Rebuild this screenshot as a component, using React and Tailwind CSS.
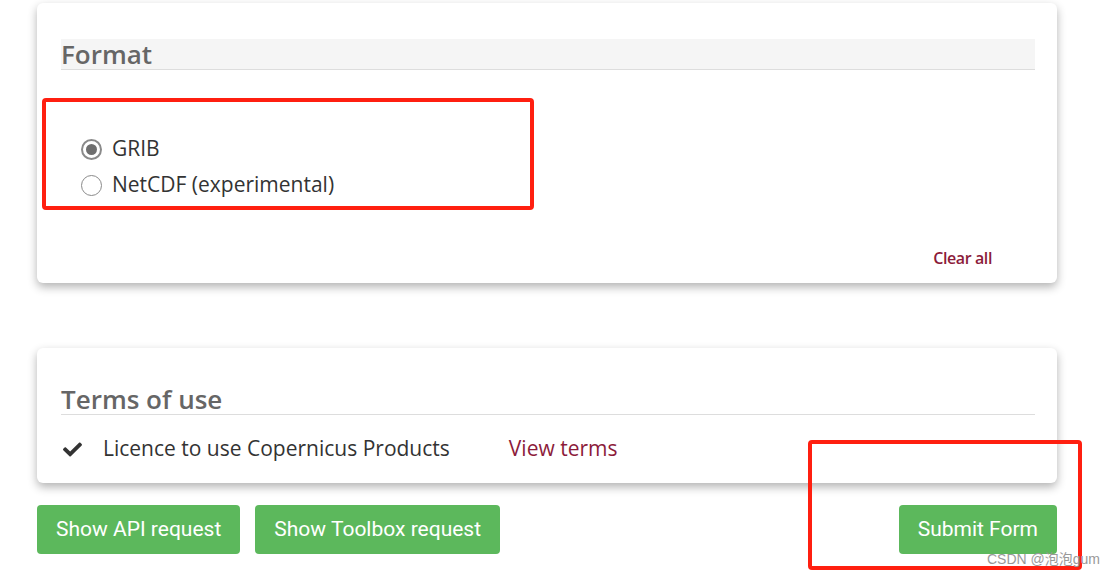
import { FaCheck } from 'react-icons/fa';

const OPEN = { fontFamily: '"Open Sans", "Noto Sans", sans-serif' };
const ROBOTO = { fontFamily: 'Roboto, "Liberation Sans", sans-serif' };

function Radio({ checked, label }) {
    return (
        <label className="flex items-center h-9 gap-[10px] text-[21px] text-[#333]">
            <span
                className={
                    checked
                        ? 'w-[21px] h-[21px] rounded-full border-2 border-[#8a8a8a] bg-white flex items-center justify-center'
                        : 'w-[21px] h-[21px] rounded-full border border-[#8a8a8a] bg-white flex items-center justify-center'
                }
            >
                {checked && <span className="w-[11px] h-[11px] rounded-full bg-[#6f6f6f]" />}
            </span>
            {label}
        </label>
    );
}

export default function App() {
    return (
        <div className="relative w-[1116px] h-[576px] bg-white overflow-hidden" style={OPEN}>
            <div className="ml-[37px] w-[1020px] pt-[3px]">
                <div className="bg-white rounded-md shadow-[0_4px_10px_rgba(0,0,0,0.3)] pl-6 pr-[22px] pt-9 h-[280px] flex flex-col">
                    <h2 className="bg-[#f5f5f5] border-b border-[#ddd] h-[31px] leading-[30px] text-[26px] font-semibold text-[#666]">
                        Format
                    </h2>
                    <div className="mt-[61px] ml-5 flex flex-col">
                        <Radio checked label="GRIB" />
                        <Radio label="NetCDF (experimental)" />
                    </div>
                    <div className="mt-[43px] flex justify-end pr-[43px]">
                        <a className="text-[16px] font-semibold text-[#8c1b3a] tracking-[-0.4px]">Clear all</a>
                    </div>
                </div>

                <div className="mt-[65px] bg-white rounded-md shadow-[0_4px_10px_rgba(0,0,0,0.3)] pl-6 pr-[22px] pt-9 pb-[19px]">
                    <h2 className="border-b border-[#ddd] h-[31px] leading-[30px] text-[26px] font-semibold text-[#666]">
                        Terms of use
                    </h2>
                    <div className="mt-[19px] h-[30px] flex items-center text-[21px] text-[#333]">
                        <FaCheck className="ml-[1px] w-[21px] h-[19px] text-[#333]" />
                        <span className="ml-[20px]">Licence to use Copernicus Products</span>
                        <a className="ml-[59px] text-[#8c1b3a]">View terms</a>
                    </div>
                </div>

                <div className="mt-[22px] flex items-center gap-[15px]" style={ROBOTO}>
                    <button className="h-[49px] px-[19px] rounded bg-[#5cb85c] text-white text-[21px]">Show API request</button>
                    <button className="h-[49px] px-[19px] rounded bg-[#5cb85c] text-white text-[21px]">Show Toolbox request</button>
                    <button className="ml-auto h-[49px] px-[19px] rounded bg-[#5cb85c] text-white text-[21px]">Submit Form</button>
                </div>
            </div>

            <div className="absolute left-[42px] top-[98px] w-[492px] h-[112px] border-4 border-[#ff1f10] rounded" />
            <div className="absolute left-[808px] top-[440px] w-[274px] h-[130px] border-4 border-[#ff1f10] rounded" />
            <div className="absolute left-[987px] top-[549px] text-[14px] text-[#999]" style={{ fontFamily: '"Liberation Sans", "Noto Sans CJK SC", sans-serif' }}>
                CSDN @泡泡gum
            </div>
        </div>
    );
}
